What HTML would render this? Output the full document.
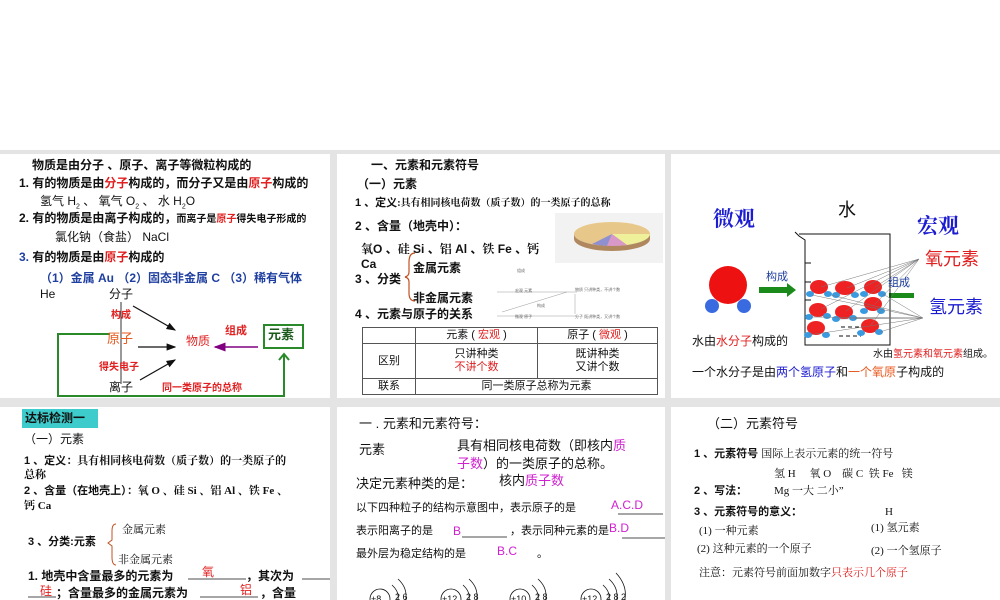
<!DOCTYPE html>
<html><head><meta charset="utf-8"><style>
*{margin:0;padding:0;box-sizing:border-box}
body{width:1000px;height:600px;background:#fff;position:relative;overflow:hidden;font-family:"Liberation Sans","Noto Sans CJK SC",sans-serif;color:#111}
.gray{position:absolute;left:0;top:150px;width:1000px;height:450px;background:#e4e4e4}
.p{position:absolute;background:#fff;overflow:hidden}
.t{position:absolute;white-space:nowrap;font-size:12px;line-height:14px}
.b{font-weight:bold}
.r{color:#e02020}.bl{color:#1f3fa0}.m{color:#d020d0}.o{color:#e85a20}
.s{font-family:"Liberation Serif","Noto Serif CJK SC",serif}
table{border-collapse:collapse;font-size:11px}
td{border:1px solid #555;text-align:center;line-height:13px}
</style></head><body>
<div class="gray"></div>

<!-- Panel 1 -->
<div class="p" style="left:0;top:154px;width:330px;height:244px">
<svg width="330" height="244" style="position:absolute;left:0;top:0">
<defs><marker id="ak" markerWidth="8" markerHeight="8" refX="7" refY="4" orient="auto"><path d="M0,1 L8,4 L0,7 Z" fill="#111"/></marker>
<marker id="ap" markerWidth="8" markerHeight="8" refX="1" refY="4" orient="auto"><path d="M8,1 L0,4 L8,7 Z" fill="#800080"/></marker></defs>
<line x1="121" y1="148" x2="121" y2="230" stroke="#333" stroke-width="1"/>
<line x1="133" y1="152" x2="175" y2="176" stroke="#111" stroke-width="1.2" marker-end="url(#ak)"/>
<line x1="138" y1="193" x2="175" y2="193" stroke="#111" stroke-width="1.2" marker-end="url(#ak)"/>
<line x1="140" y1="226" x2="175" y2="206" stroke="#111" stroke-width="1.2" marker-end="url(#ak)"/>
<line x1="215" y1="193" x2="258" y2="193" stroke="#800080" stroke-width="1.5" marker-start="url(#ap)"/>
<polyline points="110,180 58,180 58,242 284,242 284,200" fill="none" stroke="#2a8a2a" stroke-width="2"/>
<polyline points="279,206 284,200 289,206" fill="none" stroke="#2a8a2a" stroke-width="2"/>
<rect x="264" y="171" width="39" height="23" fill="#fff" stroke="#2a8a2a" stroke-width="2"/>
</svg>
<div class="t b" style="left:32px;top:4px">物质是由分子 、原子、离子等微粒构成的</div>
<div class="t b" style="left:19px;top:22px">1. 有的物质是由<span class="r">分子</span>构成的，而分子又是由<span class="r">原子</span>构成的</div>
<div class="t" style="left:40px;top:40px">氢气 H<sub style="font-size:7px">2</sub> 、 氧气 O<sub style="font-size:7px">2</sub> 、 水 H<sub style="font-size:7px">2</sub>O</div>
<div class="t b" style="left:19px;top:57px">2. 有的物质是由离子构成的，<span style="font-size:10px">而离子是<span class="r">原子</span>得失电子形成的</span></div>
<div class="t" style="left:55px;top:76px">氯化钠（食盐） NaCl</div>
<div class="t b" style="left:19px;top:96px"><span class="bl">3.</span> 有的物质是由<span class="r">原子</span>构成的</div>
<div class="t b bl" style="left:40px;top:117px">（1）金属 Au （2）固态非金属 C （3）稀有气体</div>
<div class="t" style="left:40px;top:133px">He</div>
<div class="t" style="left:109px;top:133px">分子</div>
<div class="t b r" style="left:111px;top:155px;font-size:10px">构成</div>
<div class="t o" style="left:107px;top:178px;font-size:13px">原子</div>
<div class="t r" style="left:186px;top:180px">物质</div>
<div class="t b r" style="left:225px;top:170px;font-size:11px">组成</div>
<div class="t b" style="left:268px;top:174px;color:#1a5a1a;font-size:13px">元素</div>
<div class="t b r" style="left:99px;top:207px;font-size:10px">得失电子</div>
<div class="t" style="left:109px;top:226px">离子</div>
<div class="t b r" style="left:162px;top:228px;font-size:10px">同一类原子的总称</div>
</div>

<!-- Panel 2 -->
<div class="p" style="left:337px;top:154px;width:328px;height:244px">
<div class="t b" style="left:34px;top:4px">一、元素和元素符号</div>
<div class="t b" style="left:20px;top:23px">（一）元素</div>
<div class="t b" style="left:18px;top:42px;font-size:11px">1 、定义<span class="s" style="font-size:10px">:具有相同核电荷数（质子数）的一类原子的总称</span></div>
<div class="t b" style="left:18px;top:65px">2 、含量（地壳中）：</div>
<div class="t b" style="left:24px;top:88px"><span class="s">氧</span>O 、<span class="s">硅</span> Si 、<span class="s">铝</span> Al 、<span class="s">铁</span> Fe 、<span class="s">钙</span></div>
<div class="t b" style="left:24px;top:103px">Ca</div>
<div class="t b" style="left:18px;top:118px">3 、分类</div>
<div class="t b" style="left:76px;top:107px">金属元素</div>
<div class="t b" style="left:76px;top:137px">非金属元素</div>
<svg width="328" height="244" style="position:absolute;left:0;top:0">
<path d="M78,99 Q72,99 72,108 L72,118 Q72,122 68,123 Q72,124 72,128 L72,139 Q72,147 78,147" fill="none" stroke="#c05020" stroke-width="1.2"/>
<rect x="218" y="59" width="108" height="50" fill="#f2f2f2"/>
<ellipse cx="275" cy="80" rx="38" ry="12" fill="#e8c88a"/>
<path d="M275,80 L313,80 A38,12 0 0 1 290,91 Z" fill="#eef09a"/>
<path d="M275,80 L290,91 A38,12 0 0 1 270,92 Z" fill="#d898c8"/>
<path d="M275,80 L270,92 A38,12 0 0 1 255,90 Z" fill="#9090d0"/>
<path d="M237,80 A38,12 0 0 0 313,80 L313,85 A38,12 0 0 1 237,85 Z" fill="#b08860"/>
<g stroke="#999" stroke-width="0.5"><line x1="160" y1="138" x2="240" y2="138"/><line x1="230" y1="138" x2="165" y2="158"/><line x1="238" y1="140" x2="238" y2="160"/><line x1="160" y1="162" x2="240" y2="162"/></g>
<g font-size="4" fill="#666"><text x="180" y="118">组成</text><text x="178" y="138">宏观 元素</text><text x="238" y="137">物质 只讲种类，不讲个数</text><text x="178" y="164">微观 原子</text><text x="238" y="164">分子 既讲种类，又讲个数</text><text x="200" y="153">构成</text></g>
</svg>
<div class="t b" style="left:18px;top:153px">4 、元素与原子的关系</div>
<table style="position:absolute;left:25px;top:173px;width:296px">
<tr style="height:16px"><td style="width:53px"></td><td style="width:122px">元素 ( <span class="r">宏观</span> )</td><td>原子 ( <span class="r">微观</span> )</td></tr>
<tr style="height:35px"><td>区别</td><td>只讲种类<br><span class="r">不讲个数</span></td><td>既讲种类<br>又讲个数</td></tr>
<tr style="height:16px"><td>联系</td><td colspan="2">同一类原子总称为元素</td></tr>
</table>
</div>

<!-- Panel 3 -->
<div class="p" style="left:671px;top:154px;width:329px;height:244px">
<div class="t b" style="left:42px;top:53px;font-size:21px;line-height:23px;color:#1c1cd0;font-family:'Noto Serif CJK SC',serif">微观</div>
<div class="t" style="left:167px;top:46px;font-size:18px;line-height:20px">水</div>
<div class="t b" style="left:246px;top:60px;font-size:21px;line-height:23px;color:#1c1cd0;font-family:'Noto Serif CJK SC',serif">宏观</div>
<svg width="329" height="244" style="position:absolute;left:0;top:0">
<circle cx="57" cy="131" r="19" fill="#ee1111"/>
<circle cx="41" cy="152" r="7" fill="#3a6ae0"/><circle cx="73" cy="152" r="7" fill="#3a6ae0"/>
<polygon points="88,133 116,133 116,129 125,136 116,143 116,139 88,139" fill="#1a8a1a"/>
<rect x="218" y="139" width="25" height="5" fill="#1a8a1a"/>
<polyline points="124,78 128,82 134,86 134,191 219,191 219,80 128,80" fill="none" stroke="#111" stroke-width="1"/>
<g stroke="#111"><line x1="134" y1="109" x2="140" y2="109"/><line x1="134" y1="128" x2="140" y2="128"/><line x1="134" y1="146" x2="140" y2="146"/></g>
<g stroke="#111" stroke-dasharray="4,3"><line x1="170" y1="173" x2="190" y2="173"/><line x1="168" y1="182" x2="190" y2="182"/></g>
<g fill="#ee2222">
<ellipse cx="148" cy="133" rx="9" ry="7"/><ellipse cx="174" cy="134" rx="10" ry="7"/><ellipse cx="202" cy="133" rx="9" ry="7"/>
<ellipse cx="147" cy="156" rx="9" ry="7"/><ellipse cx="173" cy="158" rx="9" ry="7"/><ellipse cx="202" cy="150" rx="9" ry="7"/>
<ellipse cx="145" cy="174" rx="9" ry="7"/><ellipse cx="199" cy="172" rx="9" ry="7"/></g>
<g fill="#3a9ae0">
<ellipse cx="139" cy="140" rx="4" ry="3"/><ellipse cx="157" cy="140" rx="4" ry="3"/><ellipse cx="165" cy="141" rx="4" ry="3"/><ellipse cx="184" cy="141" rx="4" ry="3"/><ellipse cx="193" cy="140" rx="4" ry="3"/><ellipse cx="211" cy="140" rx="4" ry="3"/>
<ellipse cx="138" cy="163" rx="4" ry="3"/><ellipse cx="156" cy="162" rx="4" ry="3"/><ellipse cx="165" cy="165" rx="4" ry="3"/><ellipse cx="182" cy="164" rx="4" ry="3"/><ellipse cx="193" cy="157" rx="4" ry="3"/><ellipse cx="210" cy="157" rx="4" ry="3"/>
<ellipse cx="137" cy="181" rx="4" ry="3"/><ellipse cx="155" cy="181" rx="4" ry="3"/><ellipse cx="190" cy="179" rx="4" ry="3"/><ellipse cx="208" cy="178" rx="4" ry="3"/></g>
<g stroke="#777" stroke-width="0.5" fill="none">
<line x1="248" y1="105" x2="150" y2="133"/><line x1="248" y1="105" x2="176" y2="134"/><line x1="248" y1="105" x2="204" y2="133"/><line x1="248" y1="105" x2="150" y2="155"/><line x1="248" y1="105" x2="175" y2="157"/><line x1="248" y1="105" x2="204" y2="150"/><line x1="248" y1="105" x2="200" y2="171"/>
<line x1="252" y1="164" x2="141" y2="141"/><line x1="252" y1="164" x2="160" y2="141"/><line x1="252" y1="164" x2="140" y2="163"/><line x1="252" y1="164" x2="166" y2="165"/><line x1="252" y1="164" x2="184" y2="164"/><line x1="252" y1="164" x2="212" y2="140"/><line x1="252" y1="164" x2="138" y2="181"/><line x1="252" y1="164" x2="209" y2="178"/></g>
</svg>
<div class="t bl" style="left:95px;top:116px;font-size:11px">构成</div>
<div class="t bl" style="left:217px;top:122px;font-size:11px">组成</div>
<div class="t r" style="left:254px;top:95px;font-size:18px;line-height:20px">氧元素</div>
<div class="t" style="left:258px;top:143px;font-size:18px;line-height:20px;color:#1c1cd0">氢元素</div>
<div class="t" style="left:21px;top:180px">水由<span class="r">水分子</span>构成的</div>
<div class="t" style="left:202px;top:194px;font-size:10px">水由<span class="r">氢元素和氧元素</span>组成。</div>
<div class="t" style="left:21px;top:211px">一个水分子是由<span style="color:#1c1cd0">两个氢原子</span>和<span class="o">一个氧原</span>子构成的</div>
</div>

<!-- Panel 4 -->
<div class="p" style="left:0;top:407px;width:330px;height:193px">
<div class="t b" style="left:22px;top:2px;width:76px;height:19px;background:#3ecbcb;padding:2px 3px">达标检测一</div>
<div class="t" style="left:24px;top:25px">（一）元素</div>
<div class="t b" style="left:24px;top:47px;font-size:11px">1 、定义<span class="s">：具有相同核电荷数（质子数）的一类原子的</span></div>
<div class="t b s" style="left:24px;top:61px;font-size:11px">总称</div>
<div class="t b" style="left:24px;top:77px;font-size:11px">2 、含量（在地壳上）<span class="s">：氧 O 、硅 Si 、铝 Al 、铁 Fe 、</span></div>
<div class="t b s" style="left:24px;top:92px;font-size:11px">钙 Ca</div>
<div class="t s" style="left:122px;top:116px;font-size:11px">金属元素</div>
<div class="t b" style="left:28px;top:128px;font-size:11px">3 、分类:元素</div>
<div class="t s" style="left:118px;top:146px;font-size:11px">非金属元素</div>
<svg width="330" height="193" style="position:absolute;left:0;top:0"><path d="M116,117 Q112,117 112,124 L112,133 L108,136 L112,139 L112,150 Q112,158 116,158" fill="none" stroke="#c05020" stroke-width="1"/>
<g stroke="#111" stroke-width="0.8"><line x1="188" y1="172" x2="246" y2="172"/><line x1="302" y1="172" x2="330" y2="172"/><line x1="28" y1="190" x2="56" y2="190"/><line x1="200" y1="190" x2="258" y2="190"/></g></svg>
<div class="t b" style="left:28px;top:162px">1. 地壳中含量最多的元素为</div>
<div class="t r" style="left:202px;top:158px">氧</div>
<div class="t b" style="left:246px;top:162px">，其次为</div>
<div class="t r" style="left:40px;top:177px">硅</div>
<div class="t b" style="left:56px;top:179px">；含量最多的金属元素为</div>
<div class="t r" style="left:240px;top:176px">铝</div>
<div class="t b" style="left:260px;top:179px">，含量</div>
</div>

<!-- Panel 5 -->
<div class="p" style="left:337px;top:407px;width:328px;height:193px">
<div class="t" style="left:22px;top:10px;font-size:13px">一 . 元素和元素符号：</div>
<div class="t" style="left:22px;top:36px;font-size:13px">元素</div>
<div class="t" style="left:120px;top:30px;font-size:13px;line-height:18px">具有相同核电荷数（即核内<span class="m">质</span><br><span class="m">子数</span>）的一类原子的总称。</div>
<div class="t" style="left:19px;top:70px;font-size:13px">决定元素种类的是：</div>
<div class="t" style="left:162px;top:67px;font-size:13px">核内<span class="m">质子数</span></div>
<div class="t" style="left:19px;top:94px;font-size:11px">以下四种粒子的结构示意图中，表示原子的是</div>
<div class="t m" style="left:274px;top:91px;font-size:12px">A.C.D</div>
<div class="t" style="left:19px;top:117px;font-size:11px">表示阳离子的是</div>
<div class="t m" style="left:116px;top:117px;font-size:12px">B</div>
<div class="t" style="left:173px;top:117px;font-size:11px">，表示同种元素的是</div>
<div class="t m" style="left:272px;top:114px;font-size:12px">B.D</div>
<div class="t" style="left:19px;top:140px;font-size:11px">最外层为稳定结构的是</div>
<div class="t m" style="left:160px;top:137px;font-size:12px">B.C</div>
<div class="t" style="left:200px;top:140px;font-size:11px">。</div>
<svg width="328" height="193" style="position:absolute;left:0;top:0"><g stroke="#111" stroke-width="0.8" fill="none">
<line x1="281" y1="107" x2="326" y2="107"/><line x1="125" y1="130" x2="170" y2="130"/><line x1="285" y1="131" x2="328" y2="131"/>
<circle cx="43" cy="192" r="10"/><path d="M55,178 Q64,186 60,196"/><path d="M61,172 Q72,182 68,196"/>
<circle cx="114" cy="192" r="10"/><path d="M126,178 Q135,186 131,196"/><path d="M132,172 Q143,182 139,196"/>
<circle cx="183" cy="192" r="10"/><path d="M195,178 Q204,186 200,196"/><path d="M201,172 Q212,182 208,196"/>
<circle cx="254" cy="192" r="10"/><path d="M266,178 Q275,186 271,196"/><path d="M272,172 Q283,182 279,196"/><path d="M279,166 Q292,180 287,196"/></g>
<g font-size="9" font-family="Liberation Sans" fill="#111"><text x="34" y="195">+8</text><text x="58" y="193">2 6</text><text x="105" y="195">+12</text><text x="129" y="193">2 8</text><text x="174" y="195">+10</text><text x="198" y="193">2 8</text><text x="245" y="195">+12</text><text x="269" y="193">2 8 2</text></g></svg>
</div>

<!-- Panel 6 -->
<div class="p" style="left:671px;top:407px;width:329px;height:193px">
<div class="t" style="left:36px;top:10px;font-size:13px">（二）元素符号</div>
<div class="t b" style="left:23px;top:40px;font-size:11px">1 、元素符号 <span class="s" style="font-weight:normal">国际上表示元素的统一符号</span></div>
<div class="t s" style="left:103px;top:60px;font-size:11px">氢 H &nbsp;&nbsp;&nbsp;&nbsp;氧 O &nbsp;&nbsp;&nbsp;碳 C &nbsp;铁 Fe &nbsp;&nbsp;镁</div>
<div class="t b" style="left:23px;top:77px;font-size:11px">2 、写法：</div>
<div class="t s" style="left:103px;top:77px;font-size:11px">Mg 一大 二小”</div>
<div class="t b" style="left:23px;top:98px;font-size:11px">3 、元素符号的意义：</div>
<div class="t s" style="left:214px;top:98px;font-size:11px">H</div>
<div class="t s" style="left:28px;top:117px;font-size:11px">(1) 一种元素</div>
<div class="t s" style="left:200px;top:114px;font-size:11px">(1) 氢元素</div>
<div class="t s" style="left:26px;top:135px;font-size:11px">(2) 这种元素的一个原子</div>
<div class="t s" style="left:200px;top:137px;font-size:11px">(2) 一个氢原子</div>
<div class="t s" style="left:28px;top:159px;font-size:11px">注意：元素符号前面加数字<span class="r">只表示几个原子</span></div>
</div>
</body></html>
